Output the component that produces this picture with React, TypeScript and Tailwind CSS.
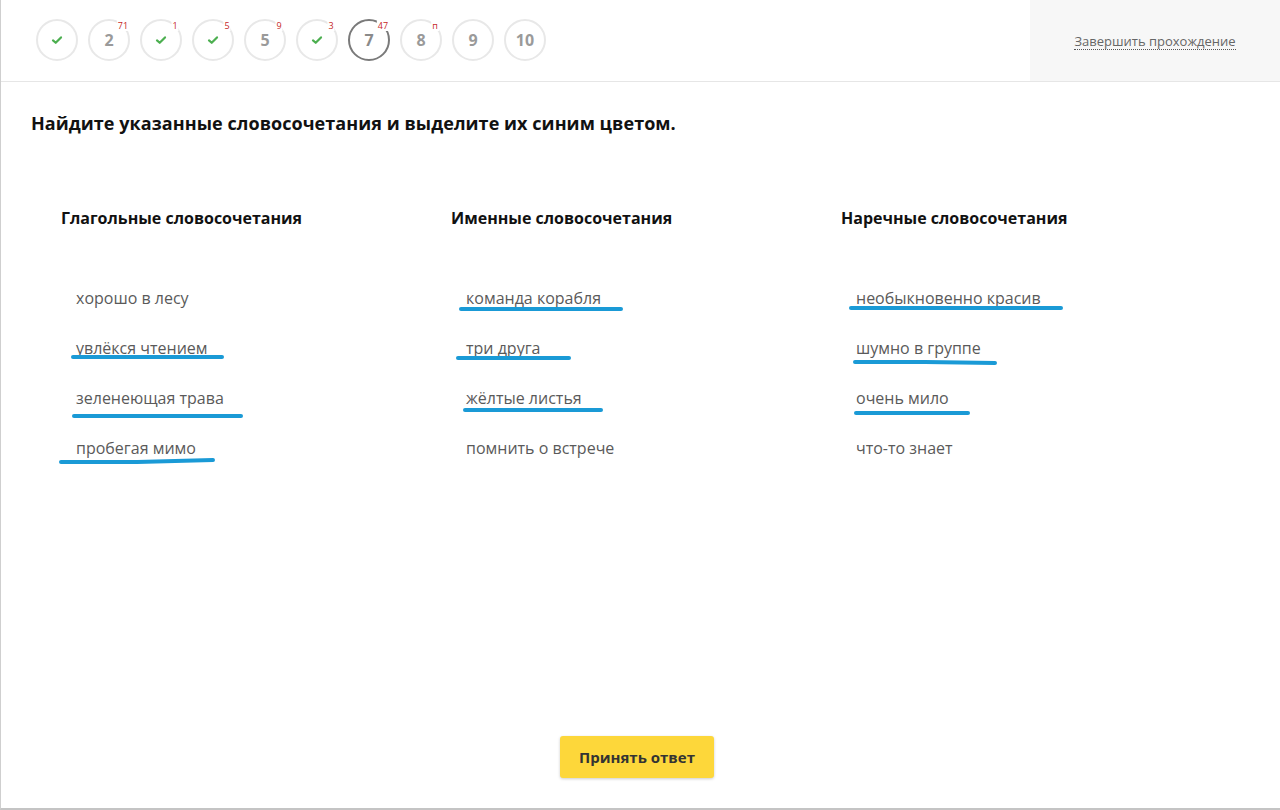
import React from "react";

type Step = { label?: string; done?: boolean; badge?: string; active?: boolean };

const steps: Step[] = [
  { done: true },
  { label: "2", badge: "71" },
  { done: true, badge: "1" },
  { done: true, badge: "5" },
  { label: "5", badge: "9" },
  { done: true, badge: "3" },
  { label: "7", badge: "47", active: true },
  { label: "8", badge: "п" },
  { label: "9" },
  { label: "10" },
];

type Item = { text: string; pts?: string };

const columns: { title: string; items: Item[] }[] = [
  {
    title: "Глагольные словосочетания",
    items: [
      { text: "хорошо в лесу" },
      { text: "увлёкся чтением", pts: "-3,9 146,9" },
      { text: "зеленеющая трава", pts: "-2,18 165,18" },
      { text: "пробегая мимо", pts: "-15,14 61,14 137,12" },
    ],
  },
  {
    title: "Именные словосочетания",
    items: [
      { text: "команда корабля", pts: "-5,11 155,11" },
      { text: "три друга", pts: "-8,10 103,10" },
      { text: "жёлтые листья", pts: "-1,12 135,12" },
      { text: "помнить о встрече" },
    ],
  },
  {
    title: "Наречные словосочетания",
    items: [
      { text: "необыкновенно красив", pts: "-5,10 205,10" },
      { text: "шумно в группе", pts: "-1,14 69,14 139,15" },
      { text: "очень мило", pts: "0,15 112,15" },
      { text: "что-то знает" },
    ],
  },
];

function Check() {
  return (
    <svg width="12" height="10" viewBox="0 0 12 10">
      <path d="M2 5.4 L4.7 7.8 L10 2.4" stroke="#4caf50" strokeWidth="2.2" fill="none" strokeLinecap="round" strokeLinejoin="round" />
    </svg>
  );
}

export default function App() {
  return (
    <div
      className="w-[1280px] h-[810px] bg-white border-l border-b-2 border-l-[#cfcfcf] border-b-[#c4c4c4] flex flex-col overflow-hidden"
      style={{ fontFamily: "'Open Sans', 'Noto Sans', sans-serif" }}
    >
      <div className="h-[82px] border-b border-[#e6e6e6] flex shrink-0">
        <div className="flex-1 flex items-center pl-[35px] gap-[10px] pb-[1px]">
          {steps.map((s, i) => (
            <div
              key={i}
              className={
                "relative w-[42px] h-[42px] rounded-full flex items-center justify-center border-2 " +
                (s.active ? "border-[#7a7a7a] text-[#8a8a8a]" : "border-[#e8e8e8] text-[#9a9a9a]")
              }
            >
              {s.done ? <Check /> : <span className="text-[16px] font-bold leading-none">{s.label}</span>}
              {s.badge && (
                <span className="absolute left-[33px] top-[-1px] -translate-x-1/2 bg-white px-[1px] text-[9px] leading-[11px] text-[#c62828]">
                  {s.badge}
                </span>
              )}
            </div>
          ))}
        </div>
        <div className="w-[250px] h-[81px] bg-[#f7f7f7] flex items-center justify-center pt-[2px]">
          <span className="text-[13px] text-[#666] leading-[16px] border-b border-dotted border-[#555]">
            Завершить прохождение
          </span>
        </div>
      </div>

      <div className="pl-[30px] pt-[29px] text-[18px] leading-[24px] font-bold text-[#111] tracking-[0.06px]">
        Найдите указанные словосочетания и выделите их синим цветом.
      </div>

      <div className="flex pl-[60px] mt-[72px]">
        {columns.map((c, ci) => (
          <div key={ci} className="w-[390px]">
            <div className="text-[16px] leading-[22px] font-bold text-[#111]">{c.title}</div>
            <div className="mt-[44px] flex flex-col">
              {c.items.map((it, ii) => (
                <div key={ii} className="h-[50px] flex items-center pl-[15px]">
                  <span className="relative inline-block text-[16px] leading-[20px] text-[#5a5a5a]">
                    {it.text}
                    {it.pts && (
                      <svg className="absolute left-0 top-1/2 w-px h-px overflow-visible pointer-events-none">
                        <polyline
                          points={it.pts}
                          stroke="#1a9ad6"
                          strokeWidth="4"
                          strokeLinecap="round"
                          strokeLinejoin="round"
                          fill="none"
                        />
                      </svg>
                    )}
                  </span>
                </div>
              ))}
            </div>
          </div>
        ))}
      </div>

      <div className="flex-1" />
      <div className="flex justify-center pr-[7px] pb-[30px]">
        <button className="w-[154px] h-[42px] rounded-[3px] bg-[#fdd73a] text-[15px] font-bold text-[#333] shadow-[0_1px_3px_rgba(0,0,0,0.2)]">
          Принять ответ
        </button>
      </div>
    </div>
  );
}
